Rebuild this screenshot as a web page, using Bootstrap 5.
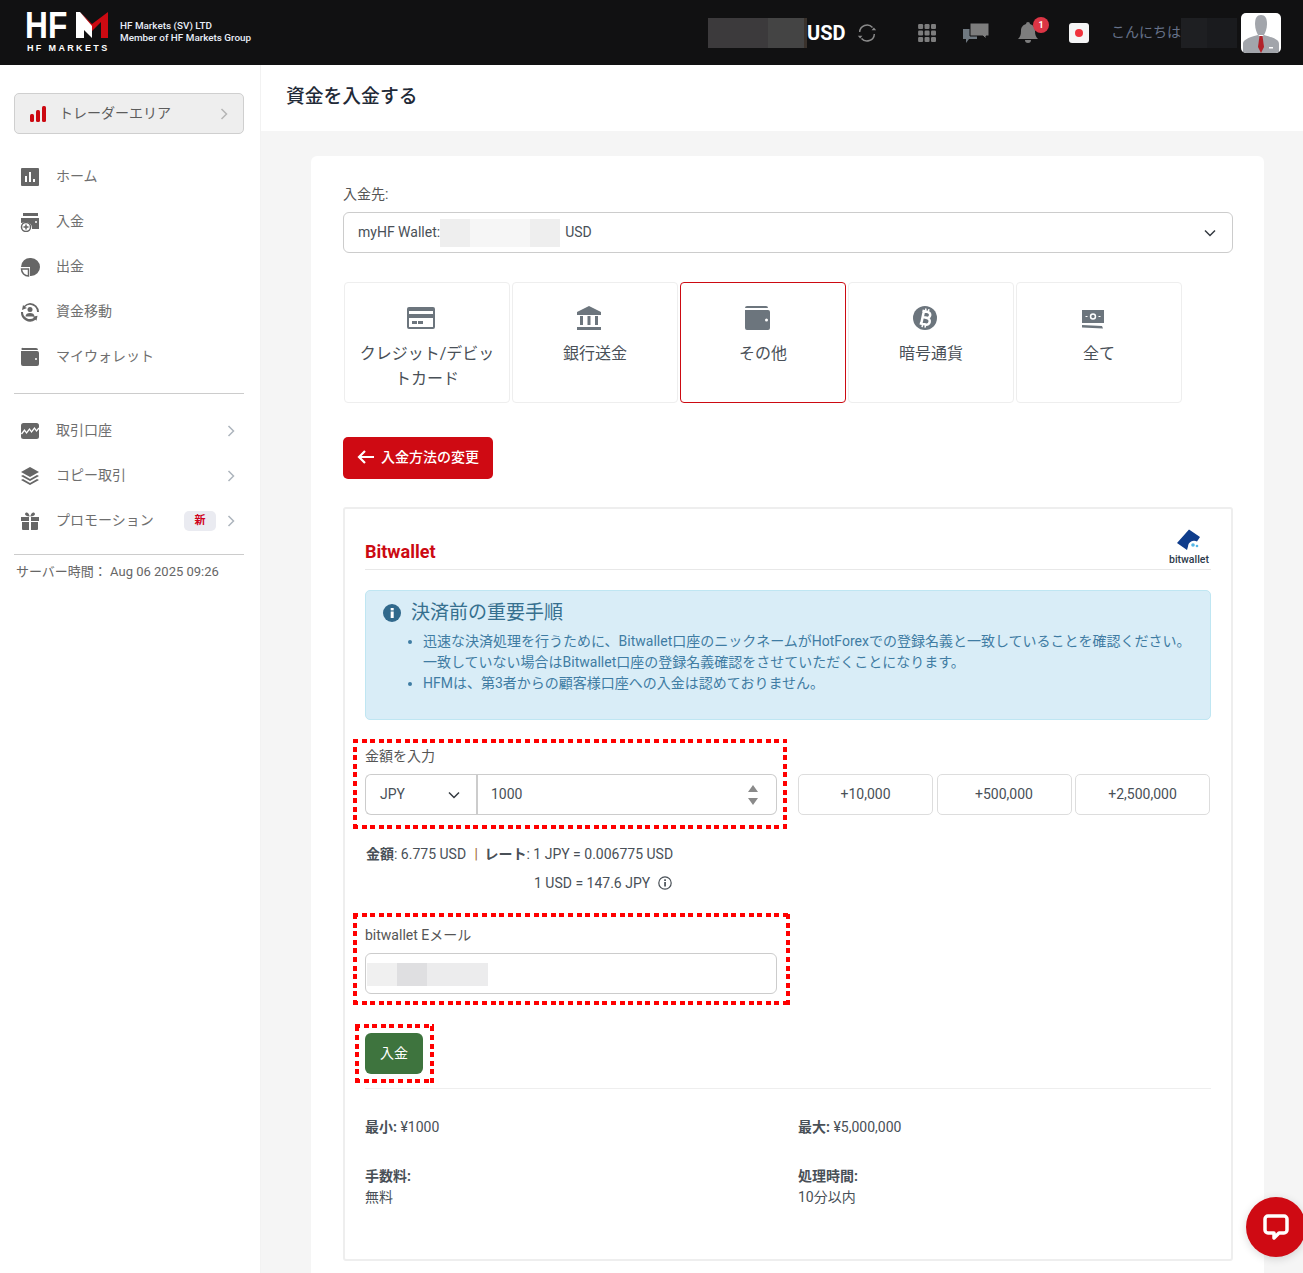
<!DOCTYPE html>
<html lang="ja">
<head>
  <meta charset="UTF-8">
  <meta name="viewport" content="width=device-width, initial-scale=1.0">
  <title>資金を入金する</title>
  <link href="https://cdn.jsdelivr.net/npm/bootstrap@5.3.2/dist/css/bootstrap.min.css" rel="stylesheet">
  <style>
    html, body { height: 100vh; overflow: hidden; }
    body { font-family: Roboto, "Noto Sans CJK JP", sans-serif; font-size: 14px; color: #495057; background: #f5f5f5; }
    .topbar { height: 65px; background: #111112; padding: 0 22px 0 27px; }
    .hfm-logo { width: 82px; height: 42px; position: relative; }
    .hfm-hf { font: bold 36px/27px "Liberation Sans", sans-serif; color: #fff; position: absolute; left: -2px; top: 0; transform: scaleX(.88); transform-origin: left; }
    .hfm-mark { position: absolute; left: 49px; top: 0; }
    .hfm-sub { font: bold 9px/10px "Liberation Sans", sans-serif; color: #fff; letter-spacing: 2.35px; position: absolute; left: 0; top: 31px; white-space: nowrap; }
    .hfm-tag { font-size: 9.9px; line-height: 12px; color: #e8eef8; margin: -2px 0 0 11px; font-weight: 500; }
    .mask-balance { width: 99px; height: 30px; background: linear-gradient(90deg, #3c3a3c 60px, #444 60px, #444 96px, #3a322c 96px); }
    .usd { font-size: 20px; font-weight: 700; color: #fff; width: 49px; }
    .top-ico { display: block; }
    .flag { width: 20px; height: 20px; background: #f5f5f5; border-radius: 3px; }
    .flag i { width: 8px; height: 8px; border-radius: 50%; background: #f0323c; display: block; }
    .hello { color: #667189; font-size: 14px; }
    .mask-name { width: 56px; height: 30px; background: linear-gradient(90deg, #1e1f22 26px, #1a1b1e 26px); }
    .avatar { width: 40px; height: 40px; border-radius: 5px; background: #fff; overflow: hidden; margin-left: 4px; }
    .badge-bell { position: absolute; top: -5px; right: -11px; width: 16px; height: 16px; border-radius: 50%; background: #dc3545; color: #fff; font-size: 9px; font-weight: 700; line-height: 16px; text-align: center; }

    .layout { height: calc(100vh - 65px); }
    .sidebar { width: 261px; flex: none; background: #fff; padding: 28px 16px 0 14px; border-right: 1px solid #f2f2f2; }
    .trader-btn { height: 41px; background: #eee; border: 1px solid #cfcfcf; border-radius: 5px; padding: 0 15px; color: #5c5c5c; font-size: 14px; }
    .trader-btn .chev { margin-left: auto; }
    .side-menu { margin-top: 20px; }
    .side-item { height: 45px; padding-left: 6px; padding-right: 9px; color: #6f6f6f; font-size: 14px; }
    .side-item svg.ico { width: 20px; height: 20px; margin-right: 16px; flex: none; fill: #666; }
    .side-item .chev { margin-left: auto; }
    .side-rule { border-top: 1px solid #ccc; }
    .tag-new { width: 32px; height: 20px; margin-left: auto; margin-right: 11px; border-radius: 5px; background: #eaebf1; color: #d0021b; font-size: 11px; font-weight: 700; text-align: center; line-height: 20px; }
    .tag-new + .chev { margin-left: 0; }
    .server-time { font-size: 13px; color: #666; padding: 7px 2px; }

    .main { flex: 1; min-width: 0; }
    .page-title { height: 66px; background: #fff; padding: 0 0 1px 25px; font-size: 18.8px; font-weight: 500; color: #1f2a37; }
    .content-wrap { padding: 25px 39px 0 50px; }
    .panel { background: #fff; border-radius: 6px; padding: 28px 31px 40px 32px; }
    .form-lbl { color: #555; line-height: 20px; margin-bottom: 8px; }
    .fake-select { height: 41px; border: 1px solid #ccc; border-radius: 6px; padding: 0 16px 0 14px; color: #495057; }
    .mask-wallet { width: 120px; height: 28px; background: linear-gradient(90deg, #eee 30px, #f6f6f6 30px, #f6f6f6 90px, #eee 90px); margin: 0 5px 0 0; }
    .tabs { margin: 29px 0 34px 1px; gap: 2px; }
    .pay-tab { width: 166px; height: 121px; border: 1px solid #eee; border-radius: 4px; padding: 20px 12px 0; text-align: center; font-size: 16px; line-height: 25px; color: #495057; }
    .pay-tab.active { border-color: #cc0a12; }
    .pay-tab svg { width: 30px; height: 30px; display: block; margin: 0 0 8px calc(50% - 21px); fill: #6c757d; }
    .btn-back { height: 42px; width: 150px; background: #cf0a13; border: 0; border-radius: 5px; color: #fff; font-size: 14px; font-weight: 500; padding: 0 0 2px; }
    .method-box { margin-top: 28px; height: 754px; border: 2px solid #eee; border-radius: 3px; padding: 0 20px; }
    .method-head { height: 61px; border-bottom: 1px solid #e8e8e8; }
    .method-title { color: #cc0a12; font-size: 18px; font-weight: 700; line-height: 24px; padding-bottom: 5px; }
    .bw-logo { width: 44px; text-align: center; padding-bottom: 4px; }
    .bw-logo span { display: block; font-size: 10.5px; line-height: 10px; font-weight: 500; color: #2c3a4a; margin-top: 3px; }
    .notice { margin-top: 20px; height: 130px; background: #d9edf7; border: 1px solid #bfe6f2; border-radius: 5px; color: #3f7ca3; padding: 8px 17px; }
    .notice h4 { font-size: 19px; line-height: 28px; color: #36708f; font-weight: 400; margin: 0 0 4px; }
    .notice ul { margin: 0; padding-left: 40px; line-height: 21px; font-size: 14px; }
    /* square red dashes, a plain dashed border draws them too long */
    .mark-box {
      margin-left: -12px; padding: 7px 10px 0 12px;
      background:
        repeating-linear-gradient(90deg, #f00 0 5px, transparent 5px 8.6px) top / 100% 4px no-repeat,
        repeating-linear-gradient(90deg, #f00 0 5px, transparent 5px 8.6px) bottom / 100% 4px no-repeat,
        repeating-linear-gradient(0deg, #f00 0 5px, transparent 5px 8.6px) left / 4px 100% no-repeat,
        repeating-linear-gradient(0deg, #f00 0 5px, transparent 5px 8.6px) right / 4px 100% no-repeat;
    }
    .amount-mark { margin-top: 19px; width: 434px; height: 90px; flex: none; }
    .amount-input .sel { width: 111px; height: 41px; border: 1px solid #ccc; border-radius: 6px 0 0 6px; border-right: 0; padding: 0 16px 0 14px; }
    .amount-input .val { flex: 1; height: 41px; border: 1px solid #ccc; border-left-width: 2px; border-radius: 0 6px 6px 0; padding: 0 13px; position: relative; }
    .spinner { position: absolute; right: 18px; top: 9px; width: 10px; }
    .quick-wrap { margin-left: 11px; margin-top: 54px; gap: 3.5px; }
    .quick-btn { width: 135px; height: 41px; border: 1px solid #ddd; border-radius: 5px; background: #fff; color: #495057; font-size: 14px; padding: 0; }
    .rate { margin-top: 14px; padding-left: 1px; line-height: 22px; }
    .rate .sep { color: #a06a30; margin: 0 3px 0 5px; }
    .rate-2 { margin-left: 168px; margin-top: 7px; }
    .email-mark { margin-top: 19px; width: 437px; height: 92px; padding-top: 12px; }
    .email-field { width: 412px; height: 41px; border: 1px solid #ccc; border-radius: 6px; padding: 9px 0 0 1px; }
    .mask-email { width: 121px; height: 23px; background: linear-gradient(90deg, #f0f0f0 30px, #dfdfe1 30px, #dfdfe1 60px, #ececed 60px); }
    .submit-mark { margin-top: 19px; margin-left: -10px; width: 79px; height: 59px; padding: 9px 0 0 10px; }
    .btn-deposit { width: 58px; height: 41px; background: #3e743e; border: 0; border-radius: 6px; color: #fff; font-size: 14px; padding: 0; display: block; }
    .facts { border-top: 1px solid #eee; margin-top: 5px; padding-top: 28px; line-height: 21px; }
    .fact-col { width: 433px; flex: none; }
    .facts b, .facts-row2 b { font-weight: 700; }
    .facts-row2 { margin-top: 28px; line-height: 21px; }
    .chat-fab { position: fixed; left: 1246px; top: 1197px; width: 60px; height: 60px; border-radius: 50%; background: #cf0a13; box-shadow: 0 2px 8px rgba(0,0,0,.15); }
    .chat-fab svg { position: absolute; left: 16px; top: 16px; }
  </style>
</head>
<body>

  <!-- Header -->
  <header class="topbar d-flex align-items-center">
    <div class="hfm-logo">
      <span class="hfm-hf">HF</span>
      <svg class="hfm-mark" width="32" height="27" viewBox="0 0 32 27">
        <polygon points="0,0 4,0 16,13 16,26 8,18 8,26 0,26" fill="#fff"/>
        <polygon points="4,0 16,12 32,0 32,26 25,26 25,10 16,19 16,14" fill="#cc0a12"/>
      </svg>
      <span class="hfm-sub">HF MARKETS</span>
    </div>
    <div class="hfm-tag">HF Markets (SV) LTD<br>Member of HF Markets Group</div>

    <div class="ms-auto d-flex align-items-center">
      <div class="mask-balance"></div>
      <div class="usd">USD</div>
      <svg class="top-ico" width="22" height="22" viewBox="0 0 24 24" fill="none" stroke="#8a8a8a" stroke-width="1.6">
        <path d="M4 11a8 8 0 0 1 14-5"/><path d="M20 13a8 8 0 0 1-14 5"/>
        <path d="M17 9h5l-2.500-3z" fill="#8a8a8a" stroke="none"/><path d="M2 15h5l-2.500 3z" fill="#8a8a8a" stroke="none"/>
      </svg>
      <svg class="top-ico" style="margin-left:39px" width="20" height="20" viewBox="0 0 18 18" fill="#7d7d7d">
        <rect x="1" y="1" width="4.500" height="4.500" rx="1"/><rect x="6.800" y="1" width="4.500" height="4.500" rx="1"/><rect x="12.600" y="1" width="4.500" height="4.500" rx="1"/>
        <rect x="1" y="6.800" width="4.500" height="4.500" rx="1"/><rect x="6.800" y="6.800" width="4.500" height="4.500" rx="1"/><rect x="12.600" y="6.800" width="4.500" height="4.500" rx="1"/>
        <rect x="1" y="12.600" width="4.500" height="4.500" rx="1"/><rect x="6.800" y="12.600" width="4.500" height="4.500" rx="1"/><rect x="12.600" y="12.600" width="4.500" height="4.500" rx="1"/>
      </svg>
      <svg class="top-ico" style="margin-left:25px" width="28" height="22" viewBox="0 0 28 22">
        <path d="M1 7h14v10H7l-3 4v-4H1z" fill="#6f7880"/>
        <path d="M8 1h19v13h-3v3l-3-3H8z" fill="#7d7d7d" stroke="#111112"/>
      </svg>
      <div class="position-relative" style="margin-left:28px;height:22px">
        <svg class="top-ico" width="20" height="22" viewBox="0 0 20 22" fill="#7d7d7d">
          <path d="M10 0a2 2 0 0 1 2 2c3 1 5 3 5 7 0 4 1 6 3 8H0c2-2 3-4 3-8 0-4 2-6 5-7a2 2 0 0 1 2-2z"/><path d="M7 18h6a3 3 0 0 1-6 0z"/>
        </svg>
        <span class="badge-bell">1</span>
      </div>
      <div class="flag d-flex align-items-center justify-content-center" style="margin-left:31px"><i></i></div>
      <div class="hello" style="margin-left:22px">こんにちは</div>
      <div class="mask-name"></div>
      <div class="avatar">
        <svg width="40" height="40" viewBox="0 0 40 40">
          <path d="M20 2c4 0 6 3 6 9 0 5-2 9-3 11h-6c-1-2-3-6-3-11 0-6 2-9 6-9z" fill="#a2a5ab"/>
          <path d="M2 40v-9c0-4 4-6 15-9l3 2 3-2c11 3 15 5 15 9v9z" fill="#a2a5ab"/>
          <path d="M18.500 23h3l1.500 11-3 6-3-6z" fill="#b2232a"/>
          <rect x="28" y="34" width="4" height="1.500" fill="#fff"/>
        </svg>
      </div>
    </div>
  </header>

  <div class="layout d-flex">
    <!-- Sidebar -->
    <aside class="sidebar">
      <div class="trader-btn d-flex align-items-center">
        <svg width="16" height="16" viewBox="0 0 16 16" fill="#cc0a12" style="margin-right:13px">
          <rect x="0" y="8" width="4" height="8" rx="1.500"/><rect x="6" y="4" width="4" height="12" rx="1.500"/><rect x="12" y="0" width="4" height="16" rx="1.500"/>
        </svg>
        トレーダーエリア
        <svg class="chev" width="8" height="12" viewBox="0 0 8 12" fill="none" stroke="#b5b5b5" stroke-width="1.500"><path d="M1.500 1l5 5-5 5"/></svg>
      </div>

      <nav class="side-menu">
        <div class="side-item d-flex align-items-center">
          <svg class="ico" viewBox="0 0 20 20"><path fill-rule="evenodd" d="M2 1h16a1 1 0 0 1 1 1v16a1 1 0 0 1-1 1H2a1 1 0 0 1-1-1V2a1 1 0 0 1 1-1zm3 8v6h2V9zm4-4v10h2V5zm4 7v3h2v-3z"/></svg>ホーム
        </div>
        <div class="side-item d-flex align-items-center">
          <svg class="ico" viewBox="0 0 20 20"><path d="M3 1h15v3H3z"/><path d="M1 6h18v11H12a6 6 0 0 0-8-6.500L1 11z"/><circle cx="6" cy="15" r="4.500" fill="#fff" stroke="#666" stroke-width="1.500"/><path d="M6 12.500v5M3.500 15h5" stroke="#666" stroke-width="1.500"/><circle cx="16" cy="10" r="1" fill="#fff"/></svg>入金
        </div>
        <div class="side-item d-flex align-items-center">
          <svg class="ico" viewBox="0 0 20 20"><path d="M11 1a9 9 0 0 1 0 18H10v-9H1a9 9 0 0 1 10-9z"/><path d="M1.500 12h7v7a7 7 0 0 1-7-7z" fill="none" stroke="#666" stroke-width="1.500"/></svg>出金
        </div>
        <div class="side-item d-flex align-items-center">
          <svg class="ico" viewBox="0 0 20 20"><path d="M10 1a9 9 0 0 1 9 9h-2a7 7 0 0 0-12-5l2 1-5 2 1-5 1 1a9 9 0 0 1 6-3zM1 10h2a7 7 0 0 0 11 5.700l-1.500-1 5-1-1 5-1-1A9 9 0 0 1 1 10z"/><circle cx="10" cy="7.500" r="2.500"/><path d="M5.500 14.500c0-2.500 2-3.500 4.500-3.500s4.500 1 4.500 3.500z"/></svg>資金移動
        </div>
        <div class="side-item d-flex align-items-center">
          <svg class="ico" viewBox="0 0 20 20"><path fill-rule="evenodd" d="M3 1h13a2 2 0 0 1 2 2H2a1 1 0 0 1 1-2zM1 4h16a2 2 0 0 1 2 2v11a2 2 0 0 1-2 2H3a2 2 0 0 1-2-2zm14 8a1 1 0 1 0 2 0 1 1 0 0 0-2 0z"/></svg>マイウォレット
        </div>
      </nav>

      <div class="side-rule" style="margin-top:14px;margin-bottom:14px"></div>

      <nav>
        <div class="side-item d-flex align-items-center">
          <svg class="ico" viewBox="0 0 20 20"><rect x="1" y="2" width="18" height="16" rx="2.500"/><path d="M1.500 13l3-4 2 3 3-4 2 3 3-4 2 3 2.500-3" fill="none" stroke="#fff" stroke-width="1.300"/></svg>取引口座
          <svg class="chev" width="8" height="12" viewBox="0 0 8 12" fill="none" stroke="#adb5bd" stroke-width="1.500"><path d="M1.500 1l5 5-5 5"/></svg>
        </div>
        <div class="side-item d-flex align-items-center">
          <svg class="ico" viewBox="0 0 20 20"><path d="M10 1l9 5-9 5-9-5z"/><path d="M1 10l2-1 7 4 7-4 2 1-9 5z"/><path d="M1 14l2-1 7 4 7-4 2 1-9 5z"/></svg>コピー取引
          <svg class="chev" width="8" height="12" viewBox="0 0 8 12" fill="none" stroke="#adb5bd" stroke-width="1.500"><path d="M1.500 1l5 5-5 5"/></svg>
        </div>
        <div class="side-item d-flex align-items-center">
          <svg class="ico" viewBox="0 0 20 20"><path d="M1 6h8v4H1zM11 6h8v4h-8zM2 11h7v8H3a1 1 0 0 1-1-1zM11 11h7v7a1 1 0 0 1-1 1h-6z"/><path d="M9.500 5.500C7 5.500 5 4.500 5 3s2-2 3-1 2 3.500 1.500 3.500zM10.500 5.500c2.500 0 4.500-1 4.500-2.500s-2-2-3-1-2 3.500-1.500 3.500z"/></svg>プロモーション
          <span class="tag-new">新</span>
          <svg class="chev" width="8" height="12" viewBox="0 0 8 12" fill="none" stroke="#adb5bd" stroke-width="1.500"><path d="M1.500 1l5 5-5 5"/></svg>
        </div>
      </nav>

      <div class="side-rule" style="margin-top:11px"></div>
      <div class="server-time">サーバー時間： Aug 06 2025 09:26</div>
    </aside>

    <!-- Main -->
    <main class="main">
      <div class="page-title d-flex align-items-center">資金を入金する</div>

      <div class="content-wrap">
        <div class="panel">
          <div class="form-lbl">入金先:</div>
          <div class="fake-select d-flex align-items-center">
            myHF Wallet:<div class="mask-wallet"></div>USD
            <svg class="ms-auto" width="12" height="8" viewBox="0 0 12 8" fill="none" stroke="#343a40" stroke-width="1.500"><path d="M1 1.500l5 5 5-5"/></svg>
          </div>

          <div class="tabs d-flex">
            <div class="pay-tab">
              <svg viewBox="0 0 30 30"><path fill-rule="evenodd" d="M3 4h24a2 2 0 0 1 2 2v18a2 2 0 0 1-2 2H3a2 2 0 0 1-2-2V6a2 2 0 0 1 2-2zm0 4v3h24V8zm0 7v9h24v-9zm3 3h5v3H6zm6 0h5v3h-5z"/></svg>
              クレジット/デビットカード
            </div>
            <div class="pay-tab">
              <svg viewBox="0 0 30 30"><path d="M15 3l12 6v3H3V9z"/><path d="M6 13h3v9H6zM13.500 13h3v9h-3zM21 13h3v9h-3zM3 24h24v3H3z"/></svg>
              銀行送金
            </div>
            <div class="pay-tab active">
              <svg viewBox="0 0 30 30"><path fill-rule="evenodd" d="M5 3h19a2 2 0 0 1 2 2H3a2 2 0 0 1 2-2zM3 7h23a2 2 0 0 1 2 2v16a2 2 0 0 1-2 2H5a2 2 0 0 1-2-2zm20 10a1.500 1.500 0 1 0 3 0 1.500 1.500 0 0 0-3 0z"/></svg>
              その他
            </div>
            <div class="pay-tab">
              <svg viewBox="0 0 30 30">
                <circle cx="15" cy="15" r="12"/>
                <g transform="rotate(12 15 15)" fill="none" stroke="#fff" stroke-width="2.500">
                  <path d="M11 8.500h5.500a3 3 0 0 1 0 6H12M12 14.500h5a3.300 3.300 0 0 1 0 6.800H11M12.500 8.500v12.800"/>
                  <path d="M14 5.500V8M17 5.500V8M14 21.800v2.700M17 21.800v2.700" stroke-width="1.500"/>
                </g>
              </svg>
              暗号通貨
            </div>
            <div class="pay-tab">
              <svg viewBox="0 0 30 30"><path fill-rule="evenodd" d="M4 7h22v13H4zM15 10.300a3.200 3.200 0 1 0 0 6.400 3.200 3.200 0 0 0 0-6.400zm0 1.500a1.700 1.700 0 1 1 0 3.400 1.700 1.700 0 0 1 0-3.400zM7.500 13h2v1h-2zM20.500 13h2v1h-2z"/><path d="M4 22l20 1 1 2.500-21-1z"/></svg>
              全て
            </div>
          </div>

          <button class="btn-back d-flex align-items-center justify-content-center">
            <svg width="17" height="14" viewBox="0 0 17 14" fill="none" stroke="#fff" stroke-width="2.200" style="margin-right:7px"><path d="M8 1L2 7l6 6M2 7h15"/></svg>
            入金方法の変更
          </button>

          <div class="method-box">
            <div class="method-head d-flex align-items-end justify-content-between">
              <div class="method-title">Bitwallet</div>
              <div class="bw-logo">
                <svg width="26" height="23" viewBox="0 0 26 23" class="d-block mx-auto">
                  <path d="M13 .5l11 7.500-3 4.500a6 6 0 0 0-9 5l-1 3.500-10-7z" fill="#0f3d8c"/>
                  <circle cx="17" cy="16" r="1.800" fill="#55b6e6"/><circle cx="21" cy="17" r="1.300" fill="#55b6e6"/>
                </svg>
                <span>bitwallet</span>
              </div>
            </div>

            <div class="notice">
              <h4 class="d-flex align-items-center">
                <svg width="18" height="18" viewBox="0 0 18 18" style="margin-right:10px"><circle cx="9" cy="9" r="9" fill="#31698c"/><rect x="7.700" y="7.500" width="3" height="6.500" fill="#fff"/><rect x="7.700" y="4" width="3" height="2.400" fill="#fff"/></svg>
                決済前の重要手順
              </h4>
              <ul>
                <li>迅速な決済処理を行うために、Bitwallet口座のニックネームがHotForexでの登録名義と一致していることを確認ください。一致していない場合はBitwallet口座の登録名義確認をさせていただくことになります。</li>
                <li>HFMは、第3者からの顧客様口座への入金は認めておりません。</li>
              </ul>
            </div>

            <div class="d-flex align-items-start">
              <div class="mark-box amount-mark">
                <div class="form-lbl">金額を入力</div>
                <div class="amount-input d-flex">
                  <div class="sel d-flex align-items-center justify-content-between">JPY
                    <svg width="12" height="8" viewBox="0 0 12 8" fill="none" stroke="#343a40" stroke-width="1.500"><path d="M1 1.500l5 5 5-5"/></svg>
                  </div>
                  <div class="val d-flex align-items-center">1000
                    <svg class="spinner" width="10" height="22" viewBox="0 0 10 22" fill="#8a8a8a"><path d="M5 1l5 7H0zM0 14h10l-5 7z"/></svg>
                  </div>
                </div>
              </div>
              <div class="quick-wrap d-flex">
                <button class="quick-btn">+10,000</button>
                <button class="quick-btn">+500,000</button>
                <button class="quick-btn">+2,500,000</button>
              </div>
            </div>

            <div class="rate"><b>金額</b>: 6.775 USD <span class="sep">|</span> <b>レート</b>: 1 JPY = 0.006775 USD</div>
            <div class="rate rate-2 d-flex align-items-center">1 USD = 147.6 JPY
              <svg width="14" height="14" viewBox="0 0 14 14" class="ms-2"><circle cx="7" cy="7" r="6.200" fill="none" stroke="#495057" stroke-width="1.200"/><rect x="6.200" y="6" width="1.700" height="4.500" fill="#495057"/><rect x="6.200" y="3.300" width="1.700" height="1.700" fill="#495057"/></svg>
            </div>

            <div class="mark-box email-mark">
              <div class="form-lbl">bitwallet Eメール</div>
              <div class="email-field"><div class="mask-email"></div></div>
            </div>

            <div class="mark-box submit-mark">
              <button class="btn-deposit">入金</button>
            </div>

            <div class="facts d-flex">
              <div class="fact-col"><b>最小:</b> ¥1000</div>
              <div><b>最大:</b> ¥5,000,000</div>
            </div>
            <div class="facts-row2 d-flex">
              <div class="fact-col"><b>手数料:</b><br>無料</div>
              <div><b>処理時間:</b><br>10分以内</div>
            </div>
          </div>
        </div>
      </div>
    </main>
  </div>

  <!-- Chat button -->
  <div class="chat-fab">
    <svg width="28" height="28" viewBox="0 0 28 28" fill="none" stroke="#fff" stroke-width="3.500" stroke-linejoin="round"><path d="M6 3h16a3 3 0 0 1 3 3v11a3 3 0 0 1-3 3h-5l-5 5v-5H6a3 3 0 0 1-3-3V6a3 3 0 0 1 3-3z"/></svg>
  </div>

  <script src="https://cdn.jsdelivr.net/npm/bootstrap@5.3.2/dist/js/bootstrap.bundle.min.js"></script>
</body>
</html>
